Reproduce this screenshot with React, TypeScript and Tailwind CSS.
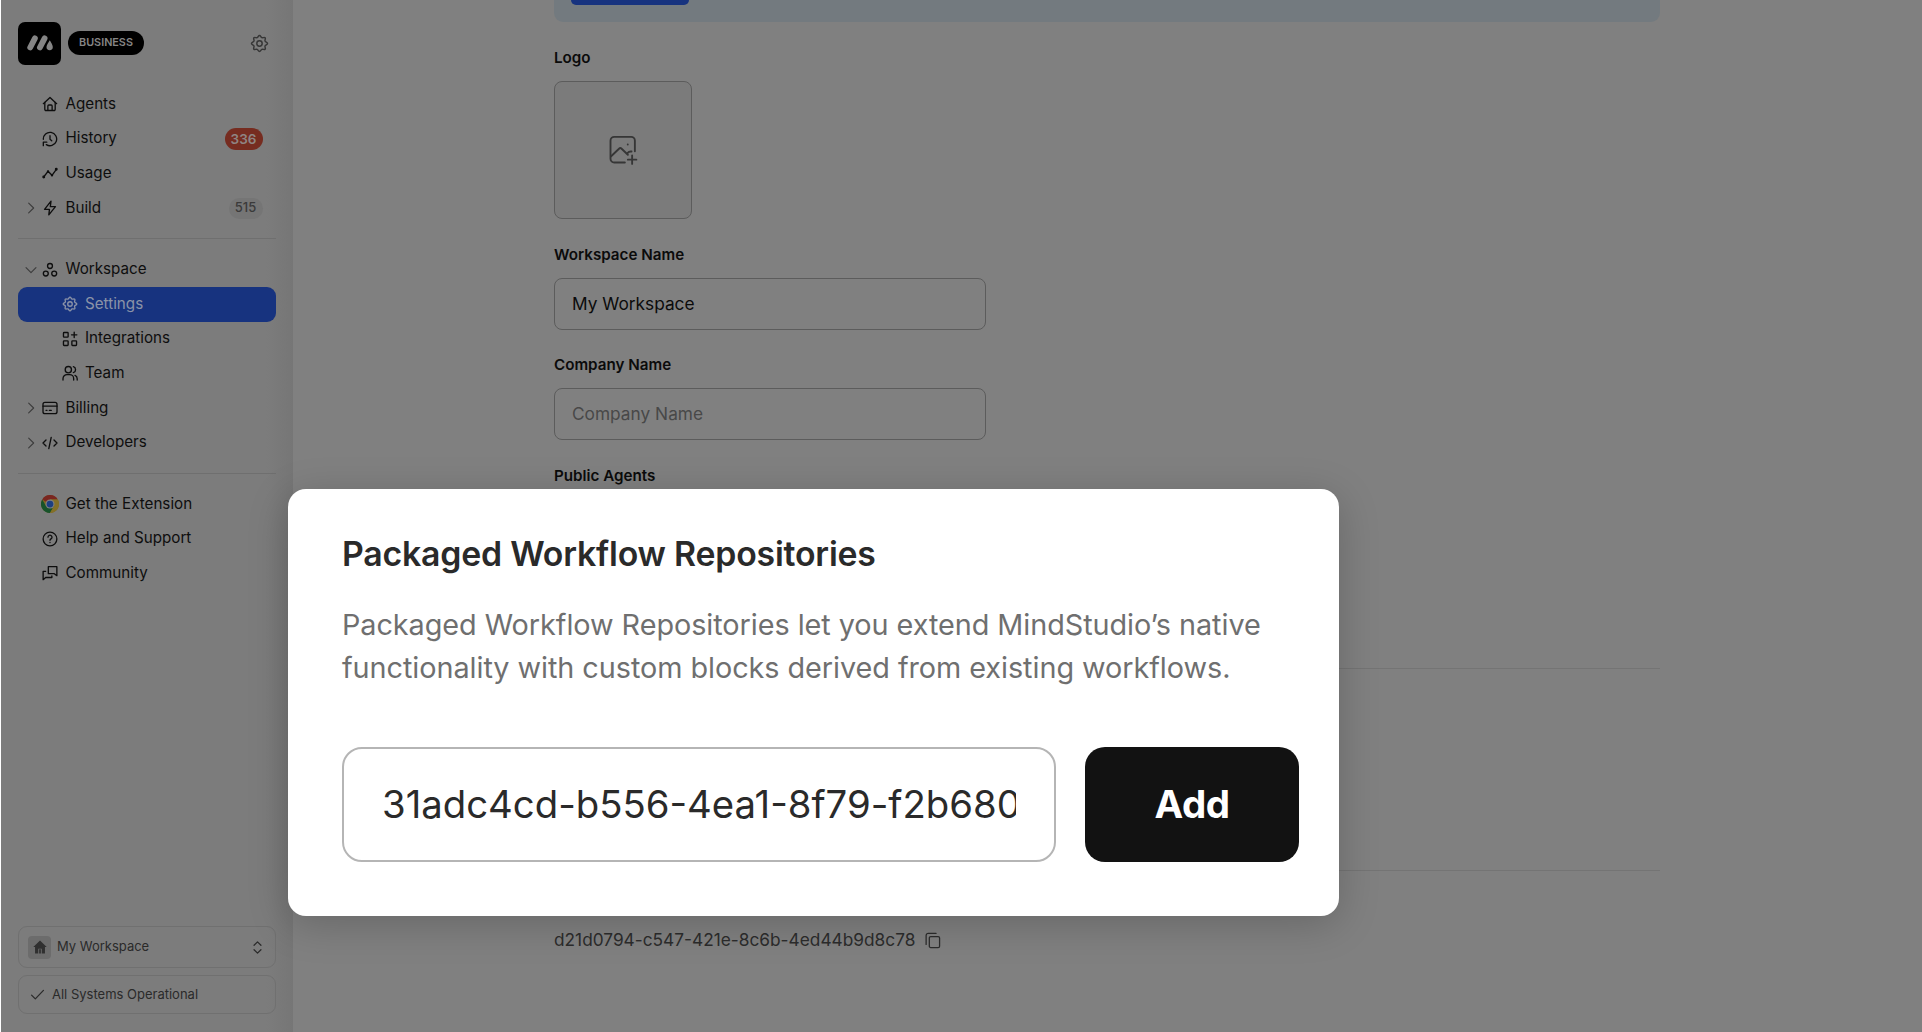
import type { ReactNode } from "react";

type IconProps = { className?: string; sw?: number; children?: ReactNode };

function Svg({ className = "size-[16px]", sw = 2, children }: IconProps) {
  return (
    <svg viewBox="0 0 24 24" fill="none" stroke="currentColor" strokeWidth={sw} strokeLinecap="round" strokeLinejoin="round" className={`shrink-0 ${className}`}>
      {children}
    </svg>
  );
}

const gearPath =
  "M12 1.8c1.5 0 1.7 2.3 3 2.85s3-1 4.1.15-.7 2.8-.15 4.1 3.25 1.6 3.25 3.1-2.7 1.8-3.25 3.1 1.2 3 .15 4.1-2.8-.4-4.1.15-1.5 2.85-3 2.85-1.7-2.3-3-2.85-3 .95-4.1-.15.7-2.8.15-4.1S1.800 13.500 1.800 12s2.700-1.800 3.250-3.100-1.200-3-.15-4.100 2.800.4 4.100-.15S10.500 1.800 12 1.800z";

const Gear = ({ className, sw = 2 }: IconProps) => (
  <Svg className={className} sw={sw}>
    <path d={gearPath} />
    <circle cx="12" cy="12" r="3.4" />
  </Svg>
);
const Home = () => (
  <Svg>
    <path d="M2 11.500 12 2.200l10 9.300" />
    <path d="M4.200 9.800V20a1.800 1.800 0 0 0 1.800 1.800h12a1.800 1.800 0 0 0 1.800-1.800V9.800" />
    <path d="M8.800 21.500V15a1.500 1.500 0 0 1 1.500-1.500h3.400a1.500 1.500 0 0 1 1.500 1.500v6.500" />
  </Svg>
);
const History = () => (
  <Svg>
    <path d="M2 12.500A10 10 0 1 1 6.500 20.400" />
    <path d="M2 22v-5.200h5.200" />
    <path d="M12 7v5.500l2.600 2.200" />
  </Svg>
);
const Usage = () => (
  <Svg>
    <path d="M2.500 18 9 9.500l6 6L21.500 6.500" />
    <circle cx="2.600" cy="18" r="1.200" fill="currentColor" />
    <circle cx="9" cy="9.500" r=".8" fill="currentColor" />
    <circle cx="15" cy="15.500" r=".8" fill="currentColor" />
    <circle cx="21.400" cy="6.500" r="1.200" fill="currentColor" />
  </Svg>
);
const Bolt = () => (
  <Svg>
    <path d="M13.500 1.800 3.800 14h7.400l-1 8.200L20.200 10h-7.700z" />
  </Svg>
);
const Workspace = () => (
  <Svg>
    <circle cx="12" cy="6" r="3.700" />
    <circle cx="5.700" cy="17.300" r="3.700" />
    <circle cx="18.300" cy="17.300" r="3.700" />
  </Svg>
);
const Integrations = () => (
  <Svg>
    <rect x="2.200" y="2.200" width="7" height="7" rx="1" />
    <rect x="2.200" y="14.800" width="7" height="7" rx="1" />
    <rect x="14.800" y="14.800" width="7" height="7" rx="1" />
    <path d="M18.300 1.800v8M14.300 5.800h8" />
  </Svg>
);
const Team = () => (
  <Svg>
    <circle cx="9.500" cy="7" r="4.700" />
    <path d="M1.500 22.500v-2a6 6 0 0 1 6-6h4a6 6 0 0 1 6 6v2" />
    <path d="M17 2.500a4.700 4.700 0 0 1 0 9M19.500 15.500a5.500 5.500 0 0 1 3.300 5v2" />
  </Svg>
);
const Billing = () => (
  <Svg>
    <rect x="1.500" y="3.500" width="21" height="17" rx="3" />
    <path d="M1.500 9.200h21M6 15.500h1.500M11 15.500h3" />
  </Svg>
);
const Code = () => (
  <Svg>
    <path d="M6 7.500 1.500 12 6 16.500M18 7.500l4.500 4.500-4.500 4.500M13.800 3.500l-3.600 17" />
  </Svg>
);
const Help = () => (
  <Svg>
    <circle cx="12" cy="12" r="10.300" />
    <path d="M9 9.300a3 3 0 1 1 4.500 2.600c-.9.500-1.500 1.100-1.500 2.100M12 17.200v.2" />
  </Svg>
);
const Community = () => (
  <Svg>
    <path d="M9.500 2.500H22.300V16l-3.800-3H9.500z" />
    <path d="M5.500 9.500H1.700V22l3.800-3.200h9.300V16.500" />
  </Svg>
);
const Chrome = () => (
  <svg viewBox="0 0 48 48" className="-mx-px size-[18px] shrink-0">
    <circle cx="24" cy="24" r="24" fill="#7d6820" />
    <path d="M24 24 3.200 12A24 24 0 0 1 44.800 12H24z" fill="#7a2620" />
    <path d="M3.200 12A24 24 0 0 0 24 48L34.400 30 24 24 13.600 30z" fill="#17532a" />
    <path d="M24 12h20.800A24 24 0 0 1 24 48l10.400-18z" fill="#847027" />
    <circle cx="24" cy="24" r="12" fill="#808080" />
    <circle cx="24" cy="24" r="9" fill="#1c3f82" />
  </svg>
);

const Chevron = ({ open }: { open?: boolean }) => (
  <Svg className="size-[14px] text-[#3c3c3c]" sw={1.9}>
    {open ? <path d="M3.500 8 12 16.500 20.500 8" /> : <path d="M8 3.500 16.500 12 8 20.500" />}
  </Svg>
);

type ItemProps = { icon: ReactNode; label: string; chevron?: "open" | "closed"; badge?: ReactNode; nested?: boolean; active?: boolean };

function Item({ icon, label, chevron, badge, nested, active }: ItemProps) {
  return (
    <div
      className={`flex h-[34.600px] items-center rounded-[9px] pr-[13px] text-[15.200px] ${nested ? "pl-[43.500px]" : "pl-[5.500px]"} ${
        active ? "bg-[#17337f] text-[#8b93a8]" : "text-[#0e0e0e]"
      }`}
    >
      {!nested && <span className="mr-[4.500px] flex w-[14px]">{chevron && <Chevron open={chevron === "open"} />}</span>}
      {icon}
      <span className="ml-[7.500px] grow">{label}</span>
      {badge}
    </div>
  );
}

function Sidebar() {
  return (
    <aside className="flex w-[292px] shrink-0 flex-col bg-[linear-gradient(to_right,#7c7c7c_265px,#767676)] pr-[17.500px] pl-[17px]">
      <header className="mt-[21.500px] flex h-[43px] items-center">
        <div className="flex size-[43px] items-center justify-center rounded-[7px] bg-black">
          <svg viewBox="0 0 26 16" className="h-[16px] w-[26px]" stroke="#858585" strokeWidth="5.800" strokeLinecap="round">
            <path d="M3.200 12.500 7.900 3.400M12.900 12.500 17.600 3.400" />
            <path d="M22.800 5.200c1.300 2.300 3 4.600 3 6.900a3.150 3.150 0 0 1-6.300 0c0-2.100 2-4.600 3.300-6.900z" fill="#858585" stroke="none" />
          </svg>
        </div>
        <div className="ml-[7px] flex h-6 w-[76px] items-center justify-center rounded-full bg-black text-[10.800px] font-semibold text-[#858585]">BUSINESS</div>
        <Gear className="mr-[7px] ml-auto size-[19px] text-[#363636]" sw={1.800} />
      </header>
      <nav className="mt-[22.500px] flex flex-col">
        <Item icon={<Home />} label="Agents" />
        <Item
          icon={<History />}
          label="History"
          badge={<span className="flex h-[22px] w-[38px] items-center justify-center rounded-full bg-[#762c20] text-[13.500px] font-semibold text-[#8f8583]">336</span>}
        />
        <Item icon={<Usage />} label="Usage" />
        <Item
          icon={<Bolt />}
          label="Build"
          chevron="closed"
          badge={<span className="flex h-[21px] w-[34px] items-center justify-center rounded-full bg-[#757575] text-[13px] font-medium text-[#3a3a3a]">515</span>}
        />
      </nav>
      <hr className="mt-[12.500px] mb-[13.500px] border-[#6f6f6f]" />
      <nav className="flex flex-col">
        <Item icon={<Workspace />} label="Workspace" chevron="open" />
        <Item icon={<Gear />} label="Settings" nested active />
        <Item icon={<Integrations />} label="Integrations" nested />
        <Item icon={<Team />} label="Team" nested />
        <Item icon={<Billing />} label="Billing" chevron="closed" />
        <Item icon={<Code />} label="Developers" chevron="closed" />
      </nav>
      <hr className="mt-[13px] mb-[13px] border-[#6f6f6f]" />
      <nav className="flex flex-col">
        <Item icon={<Chrome />} label="Get the Extension" />
        <Item icon={<Help />} label="Help and Support" />
        <Item icon={<Community />} label="Community" />
      </nav>
      <footer className="mt-auto mb-[18px] flex flex-col gap-[7px] text-[13px] text-[#2a2a2a]">
        <div className="flex h-[42px] items-center rounded-[9px] border border-[#707070] px-[9px]">
          <div className="flex size-[23px] items-center justify-center rounded-[4px] bg-[#6c6c6c]">
            <svg viewBox="0 0 24 24" className="size-[14px]" fill="#303030">
              <path d="M12 1 0.500 12h3v11h5.500v-8h6v8h5.500V12h3z" />
              <path d="M10.500 16h3v7h-3z" />
            </svg>
          </div>
          <span className="ml-[6px] grow">My Workspace</span>
          <Svg className="mr-[1px] size-[15px]" sw={2}>
            <path d="M6.500 8.500 12 3l5.500 5.500M6.500 15.500 12 21l5.500-5.500" />
          </Svg>
        </div>
        <div className="flex h-[39px] items-center rounded-[9px] border border-[#707070] px-[11px]">
          <Svg className="size-[15px]" sw={2}>
            <path d="M2.500 13 8.500 19 21.500 5.500" />
          </Svg>
          <span className="ml-[7px]">All Systems Operational</span>
        </div>
      </footer>
    </aside>
  );
}

const Label = ({ children }: { children: ReactNode }) => <h3 className="h-6 text-[15.200px] leading-6 font-semibold text-[#0b0b0b]">{children}</h3>;

function Settings() {
  return (
    <main className="flex grow flex-col bg-[#808080] pl-[261px]">
      <div className="flex h-full w-[1106px] flex-col">
        <div className="flex h-[22px] items-start rounded-b-[9px] bg-[#737a7f] pl-[17px]">
          <div className="h-[5px] w-[118px] rounded-b-[5px] bg-[#17337f]" />
        </div>
        <div className="mt-[24px]">
          <Label>Logo</Label>
        </div>
        <div className="mt-[11px] flex size-[138px] items-center justify-center rounded-[8px] border border-[#5c5c5c] bg-[#7b7b7b]">
          <Svg className="size-[30px] text-[#363636]" sw={1.500}>
            <path d="M13.500 22H5a3 3 0 0 1-3-3V4.500a3 3 0 0 1 3-3h13.500a3 3 0 0 1 3 3v8.500" />
            <path d="m2.500 17 6.300-6a1.500 1.500 0 0 1 2.100 0l5 4.800M15.500 14.500c1-1.200 2-1.500 3.300-1.300" />
            <path d="M15.800 7.500v.1" />
            <path d="M19.300 16.300v6.800M15.900 19.700h6.800" />
          </Svg>
        </div>
        <div className="mt-[24px]">
          <Label>Workspace Name</Label>
        </div>
        <div className="mt-[11px] flex h-[52px] w-[432px] items-center rounded-[8px] border border-[#5c5c5c] pl-[17px] text-[17.300px] text-[#0b0b0b]">My Workspace</div>
        <div className="mt-[23px]">
          <Label>Company Name</Label>
        </div>
        <div className="mt-[11px] flex h-[52px] w-[432px] items-center rounded-[8px] border border-[#5c5c5c] pl-[17px] text-[17.300px] text-[#484848]">Company Name</div>
        <div className="mt-[24px]">
          <Label>Public Agents</Label>
        </div>
        <hr className="mt-[180px] border-[#747474]" />
        <hr className="mt-[201px] border-[#747474]" />
        <div className="mt-[57px] flex h-6 items-center text-[17.300px] text-[#2c2c2c]">
          d21d0794-c547-421e-8c6b-4ed44b9d8c78
          <Svg className="ml-[9px] size-[17px]" sw={1.800}>
            <rect x="7.500" y="6.500" width="14.500" height="15.500" rx="2" />
            <path d="M3 17.500V5a3 3 0 0 1 3-3h11" />
          </Svg>
        </div>
      </div>
    </main>
  );
}

function Modal() {
  return (
    <section className="absolute top-[489px] left-[287px] flex h-[427px] w-[1051px] flex-col rounded-[18px] bg-white pr-[40px] pl-[54px] shadow-[0_8px_42px_rgba(0,0,0,0.2)]">
      <h2 className="mt-[43px] text-[33.800px] leading-[43px] font-semibold tracking-[-0.190px] whitespace-nowrap text-[#2a2a2a]">Packaged Workflow Repositories</h2>
      <p className="mt-[28px] text-[28.800px] leading-[43px] tracking-[-0.050px] whitespace-nowrap text-[#6f6f6f]">
        Packaged Workflow Repositories let you extend MindStudio’s native
        <br />
        functionality with custom blocks derived from existing workflows.
      </p>
      <div className="mt-[58px] flex h-[115px] justify-between">
        <div className="flex w-[714px] shrink-0 items-center rounded-[20px] border-[2.500px] border-[#b5b5b5] px-[38px] text-[38.300px] text-[#2a2a2a]">
          <span className="overflow-hidden whitespace-nowrap">31adc4cd-b556-4ea1-8f79-f2b680</span>
        </div>
        <div className="flex w-[214px] shrink-0 items-center justify-center rounded-[20px] bg-[#121212] text-[38.500px] font-[650] tracking-[-0.500px] text-white">Add</div>
      </div>
    </section>
  );
}

export default function App() {
  return (
    <div className="relative flex h-[1032px] w-[1922px] overflow-hidden border-l border-white bg-[#808080] font-['Inter',sans-serif]">
      <Sidebar />
      <Settings />
      <Modal />
    </div>
  );
}
